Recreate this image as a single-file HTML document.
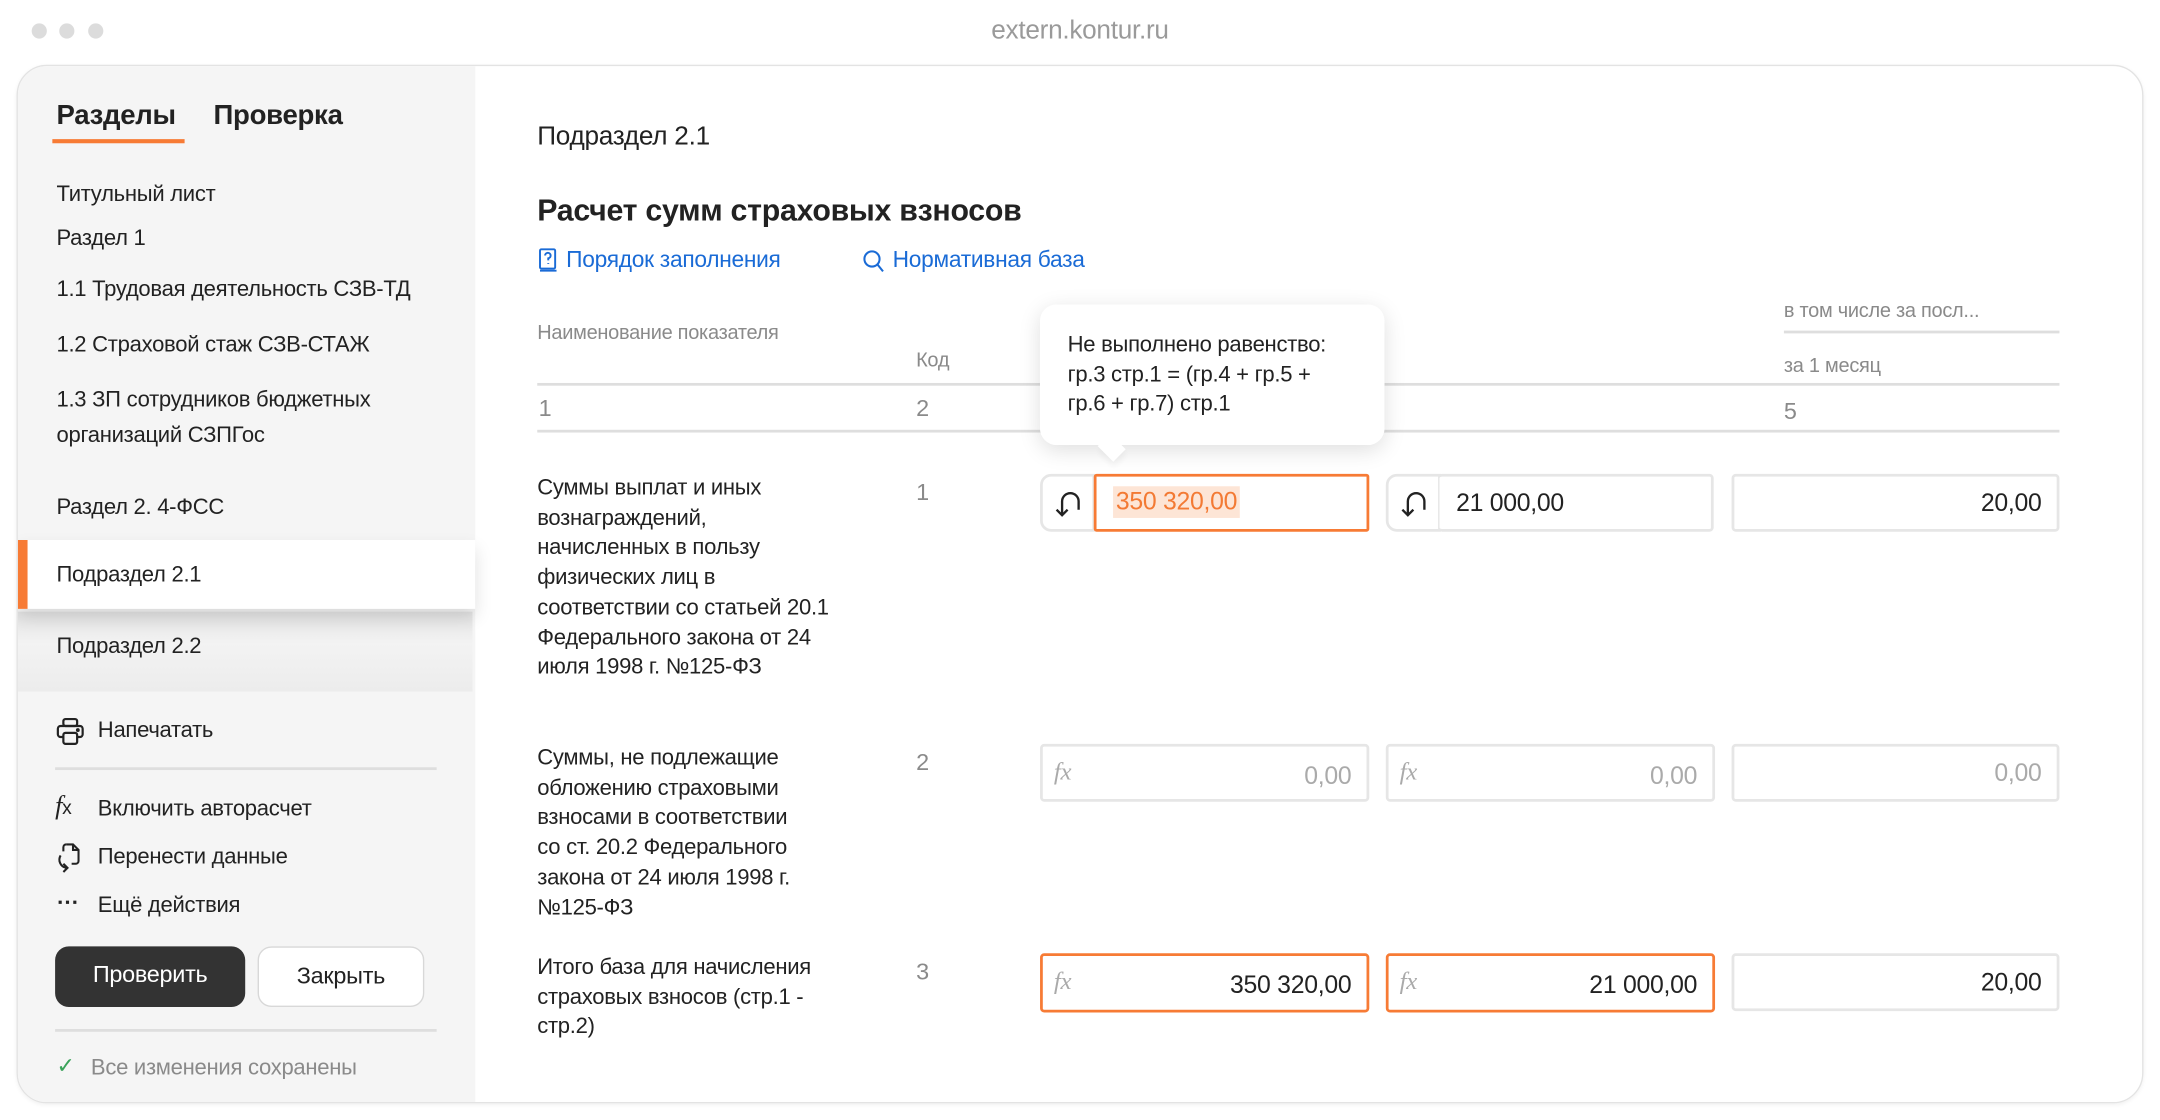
<!DOCTYPE html>
<html><head><meta charset="utf-8">
<style>
*{margin:0;padding:0;box-sizing:border-box}
html,body{width:2160px;height:1120px;overflow:hidden;background:#fff}
#s{position:absolute;left:0;top:0;width:1568px;height:813px;transform:scale(1.37755);transform-origin:0 0;font-family:"Liberation Sans",sans-serif;color:#222;letter-spacing:-0.2px}
.a{position:absolute;white-space:nowrap}
.dot{position:absolute;width:11px;height:11px;border-radius:50%;background:#dcdcdc;top:17px}
.win{position:absolute;left:12px;top:47px;width:1544px;height:754px;border:1px solid #e3e3e3;border-radius:22px;overflow:hidden;box-shadow:0 1px 3px rgba(0,0,0,.06)}
.side{position:absolute;left:0;top:0;width:332px;height:754px;background:#f5f5f5}
.mi{position:absolute;left:28px;font-size:16px;color:#222}
.hr{position:absolute;height:2px;background:#dedede}
.txt{position:absolute;left:390px;font-size:16px;line-height:21.7px;color:#222;white-space:nowrap}
.gh{color:#8a8a8a;font-size:14.5px}
.inp{position:absolute;height:42px;border:2px solid #e6e6e6;border-radius:3px;background:#fff;font-size:18px}
.inp .v{position:absolute;right:11px;top:9px}
.fx{position:absolute;left:8px;top:8px;font-family:"Liberation Serif",serif;font-style:italic;color:#aaa;font-size:18px}
.or{border-color:#f77b35}
</style></head><body><div id="s">
<div class="dot" style="left:23px"></div><div class="dot" style="left:43px"></div><div class="dot" style="left:64px"></div>
<div class="a" style="left:0;width:1568px;text-align:center;top:12px;font-size:19px;color:#9a9a9a">extern.kontur.ru</div>
<div class="win">
 <div class="side">
  <div class="a" style="left:28px;top:25px;font-size:20px;font-weight:bold">Разделы</div>
  <div class="a" style="left:142px;top:25px;font-size:20px;font-weight:bold">Проверка</div>
  <div class="a" style="left:25px;top:53px;width:96px;height:3px;background:#f77b35"></div>
  <div class="mi a" style="top:85px">Титульный лист</div>
  <div class="mi a" style="top:117px">Раздел 1</div>
  <div class="mi a" style="top:154px">1.1 Трудовая деятельность СЗВ-ТД</div>
  <div class="mi a" style="top:194px">1.2 Страховой стаж СЗВ-СТАЖ</div>
  <div class="mi a" style="top:230px;line-height:26px">1.3 ЗП сотрудников бюджетных<br>организаций СЗПГос</div>
  <div class="mi a" style="top:312px">Раздел 2. 4-ФСС</div>
  <div class="a" style="left:0;top:396px;width:330px;height:58px;background:linear-gradient(#e2e2e2,#f3f3f3 40%,#ececec)"></div>
  <div class="a" style="left:0;top:344px;width:332px;height:50px;background:#fff;box-shadow:0 6px 12px rgba(0,0,0,.12)"></div>
  <div class="a" style="left:0;top:344px;width:7px;height:50px;background:#f77b35"></div>
  <div class="mi a" style="top:361px">Подраздел 2.1</div>
  <div class="mi a" style="top:413px">Подраздел 2.2</div>
  <svg class="a" style="left:27px;top:472px" width="22" height="22" viewBox="0 0 22 22" fill="none" stroke="#222" stroke-width="1.6"><rect x="6" y="2" width="10" height="5" rx="1.5"/><rect x="2" y="7" width="18" height="8" rx="2"/><rect x="6" y="12" width="10" height="8" rx="1.5" fill="#f5f5f5"/><circle cx="16.5" cy="10" r=".6" fill="#222"/></svg>
  <div class="mi a" style="top:474px;left:58px">Напечатать</div>
  <div class="hr" style="left:27px;top:509px;width:277px"></div>
  <div class="a" style="left:27px;top:527px;font-family:'Liberation Serif',serif;font-style:italic;font-size:19px">f<span style="font-size:14px;font-style:normal;font-family:'Liberation Sans'">x</span></div>
  <div class="mi a" style="top:531px;left:58px">Включить авторасчет</div>
  <svg class="a" style="left:26px;top:562px" width="22" height="24" viewBox="0 0 22 24" fill="none" stroke="#222" stroke-width="1.5"><path d="M9 3h5l4 4v8a2 2 0 0 1-2 2h-3"/><path d="M14 3v4h4"/><path d="M9 3a2 2 0 0 0-2 2v3"/><path d="M5 11a6 6 0 0 0 4 9"/><path d="M7 17l3 3-3 3"/></svg>
  <div class="mi a" style="top:566px;left:58px">Перенести данные</div>
  <div class="a" style="left:28px;top:597px;font-size:16px;font-weight:bold">⋯</div>
  <div class="mi a" style="top:601px;left:58px">Ещё действия</div>
  <div class="a" style="left:27px;top:639px;width:138px;height:44px;background:#333;border-radius:10px;color:#fff;font-size:17px;text-align:center;line-height:42px">Проверить</div>
  <div class="a" style="left:174px;top:639px;width:121px;height:44px;background:#fff;border:1.5px solid #d8d8d8;border-radius:10px;font-size:17px;text-align:center;line-height:42px">Закрыть</div>
  <div class="hr" style="left:27px;top:699px;width:277px"></div>
  <div class="a" style="left:28px;top:716px;color:#3aa35a;font-size:16px">✓</div>
  <div class="a" style="left:53px;top:719px;color:#8a8a8a;font-size:16px">Все изменения сохранены</div>
 </div>
</div>
<div class="a" style="left:390px;top:89px;font-size:19px">Подраздел 2.1</div>
<div class="a" style="left:390px;top:140px;font-size:22px;font-weight:bold">Расчет сумм страховых взносов</div>
<svg class="a" style="left:391px;top:180px" width="14" height="18" viewBox="0 0 14 18" fill="none" stroke="#1a6bd6" stroke-width="1.4"><rect x="1" y="1" width="11" height="14" rx="1"/><path d="M1 16.5h12"/><path d="M4.7 5.5a2 2 0 1 1 2.3 2v1.5M7 11v.6"/></svg>
<div class="a" style="left:411px;top:180px;font-size:16.5px;color:#1a6bd6">Порядок заполнения</div>
<svg class="a" style="left:626px;top:181px" width="16" height="17" viewBox="0 0 16 17" fill="none" stroke="#1a6bd6" stroke-width="1.5"><circle cx="7" cy="7" r="5.5"/><path d="M11 11l4 5"/></svg>
<div class="a" style="left:648px;top:180px;font-size:16.5px;color:#1a6bd6">Нормативная база</div>
<div class="a gh" style="left:390px;top:234px">Наименование показателя</div>
<div class="a gh" style="left:665px;top:254px">Код</div>
<div class="a gh" style="left:1295px;top:218px">в том числе за посл...</div>
<div class="hr" style="left:1295px;top:240px;width:200px"></div>
<div class="a gh" style="left:1295px;top:258px">за 1 месяц</div>
<div class="hr" style="left:390px;top:278px;width:1105px"></div>
<div class="a gh" style="left:391px;top:287px;font-size:17px">1</div>
<div class="a gh" style="left:665px;top:287px;font-size:17px">2</div>
<div class="a gh" style="left:1295px;top:289px;font-size:17px">5</div>
<div class="hr" style="left:390px;top:312px;width:1105px"></div>

<div class="txt" style="top:344px">Суммы выплат и иных<br>вознаграждений,<br>начисленных в пользу<br>физических лиц в<br>соответствии со статьей 20.1<br>Федерального закона от 24<br>июля 1998 г. №125-ФЗ</div>
<div class="a gh" style="left:665px;top:348px;font-size:17px">1</div>
<div class="inp" style="left:755px;top:344px;width:40px;border-radius:8px 0 0 8px"></div>
<svg class="a" style="left:763px;top:353px" width="24" height="24" viewBox="0 0 24 24" fill="none" stroke="#222" stroke-width="1.7"><path d="M8 21V11a6 6 0 0 1 12 0v6"/><path d="M4 17l4 4 4-4"/></svg>
<div class="inp or" style="left:794px;top:344px;width:200px;border-radius:2px"><span class="a" style="left:12px;top:7px;background:#fde5d6;color:#f37a34;padding:1px 2px">350 320,00</span></div>
<div class="inp" style="left:1006px;top:344px;width:40px;border-radius:8px 0 0 8px"></div>
<svg class="a" style="left:1014px;top:353px" width="24" height="24" viewBox="0 0 24 24" fill="none" stroke="#222" stroke-width="1.7"><path d="M8 21V11a6 6 0 0 1 12 0v6"/><path d="M4 17l4 4 4-4"/></svg>
<div class="inp" style="left:1044px;top:344px;width:200px;border-left-width:1px"><span class="a" style="left:12px;top:9px">21 000,00</span></div>
<div class="inp" style="left:1257px;top:344px;width:238px"><span class="v">20,00</span></div>

<div class="txt" style="top:540px">Суммы, не подлежащие<br>обложению страховыми<br>взносами в соответствии<br>со ст. 20.2 Федерального<br>закона от 24 июля 1998 г.<br>№125-ФЗ</div>
<div class="a gh" style="left:665px;top:544px;font-size:17px">2</div>
<div class="inp" style="left:755px;top:540px;width:239px;color:#aaa"><span class="fx">fx</span><span class="v" style="top:11px">0,00</span></div>
<div class="inp" style="left:1006px;top:540px;width:239px;color:#aaa"><span class="fx">fx</span><span class="v" style="top:11px">0,00</span></div>
<div class="inp" style="left:1257px;top:540px;width:238px;color:#aaa"><span class="v">0,00</span></div>

<div class="txt" style="top:692px">Итого база для начисления<br>страховых взносов (стр.1 -<br>стр.2)</div>
<div class="a gh" style="left:665px;top:696px;font-size:17px">3</div>
<div class="inp or" style="left:755px;top:692px;width:239px;height:43px"><span class="fx">fx</span><span class="v" style="top:11px">350 320,00</span></div>
<div class="inp or" style="left:1006px;top:692px;width:239px;height:43px"><span class="fx">fx</span><span class="v" style="top:11px">21 000,00</span></div>
<div class="inp" style="left:1257px;top:692px;width:238px"><span class="v">20,00</span></div>

<div class="a" style="left:755px;top:221px;width:250px;height:102px;background:#fff;border-radius:12px;box-shadow:0 4px 16px rgba(0,0,0,.13)"></div>
<div class="a" style="left:799px;top:317px;width:16px;height:16px;background:#fff;transform:rotate(45deg) scaleY(.8);box-shadow:3px 3px 6px rgba(0,0,0,.06)"></div>
<div class="a" style="left:755px;top:221px;width:250px;height:102px;background:#fff;border-radius:12px"></div>
<div class="a" style="left:775px;top:240px;font-size:16px;line-height:21.5px">Не выполнено равенство:<br>гр.3 стр.1 = (гр.4 + гр.5 +<br>гр.6 + гр.7) стр.1</div>
</div></body></html>
